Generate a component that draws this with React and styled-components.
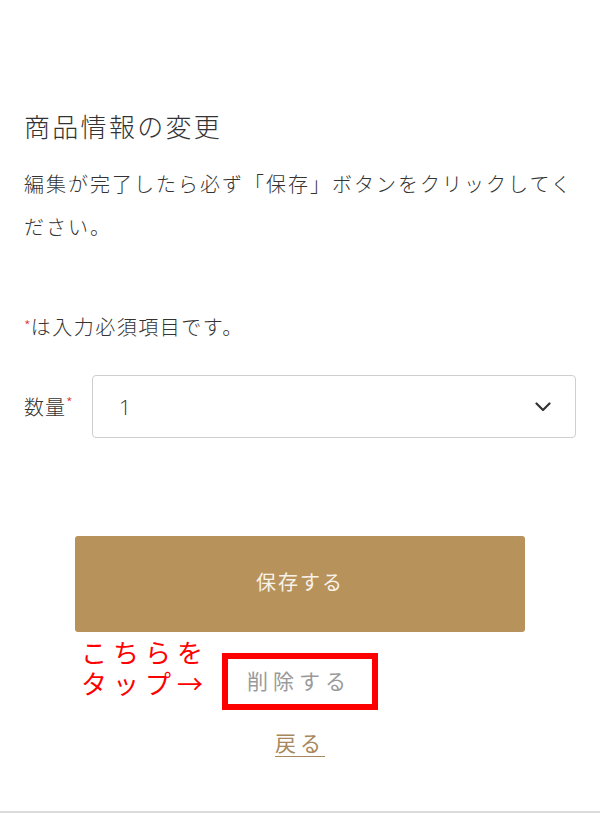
import React from "react";
import styled, { createGlobalStyle } from "styled-components";

const GlobalStyle = createGlobalStyle`
    body {
        margin: 0;
        background: #fff;
        font-family: "Noto Sans CJK JP", "Noto Sans", sans-serif;
        color: #333;
    }
`;

const Page = styled.div`
    width: 600px;
    min-height: 814px;
    background: #fff;
`;

const Content = styled.div`
    padding: 108px 24px 0;
`;

const Title = styled.h2`
    margin: 0;
    font-size: 26px;
    line-height: 36px;
    font-weight: 300;
    letter-spacing: 2.3px;
    color: #333;
`;

const Lead = styled.p`
    margin: 18px 0 0;
    font-size: 20px;
    line-height: 43px;
    font-weight: 300;
    letter-spacing: 2px;
`;

const Note = styled.p`
    margin: 63px 0 0;
    font-size: 20px;
    line-height: 30px;
    font-weight: 300;
    letter-spacing: 1.5px;
`;

const Star = styled.span`
    color: #e53935;
    font-size: 15px;
    vertical-align: ${p => (p.$raised ? "6px" : "3px")};
    letter-spacing: 0;
`;

const FieldRow = styled.div`
    display: flex;
    align-items: center;
    margin-top: 33px;
`;

const Label = styled.label`
    width: 68px;
    flex: none;
    font-size: 20px;
    font-weight: 300;
    letter-spacing: 1px;
`;

const Select = styled.div`
    flex: 1;
    height: 63px;
    box-sizing: border-box;
    border: 1px solid #cfcfcf;
    border-radius: 4px;
    display: flex;
    align-items: center;
    justify-content: space-between;
    padding: 0 24px 0 26px;
`;

const Value = styled.span`
    font-family: "Open Sans", "Noto Sans", sans-serif;
    font-weight: 300;
    font-size: 21px;
    color: #333;
`;

const Actions = styled.div`
    display: flex;
    flex-direction: column;
    align-items: center;
    margin-top: 98px;
`;

const SaveButton = styled.button`
    width: 450px;
    height: 96px;
    border: none;
    border-radius: 3px;
    background: #b8925b;
    color: #f8f2e8;
    font-family: inherit;
    font-size: 20px;
    letter-spacing: 2px;
    padding: 0 0 6px;
`;

const DeleteRow = styled.div`
    position: relative;
    margin-top: 21px;
`;

const Highlight = styled.div`
    width: 156px;
    height: 57px;
    box-sizing: border-box;
    border: 6px solid #ff0000;
    display: flex;
    align-items: center;
    justify-content: center;
`;

const DeleteButton = styled.button`
    border: none;
    background: none;
    padding: 0 2px 4px 0;
    font-family: inherit;
    font-size: 21px;
    letter-spacing: 5px;
    color: #9a9a9a;
`;

const Annotation = styled.div`
    position: absolute;
    left: -141px;
    top: -17px;
    white-space: nowrap;
    font-size: 26px;
    line-height: 31px;
    letter-spacing: 6px;
    color: #ff0000;
`;

const AnnotationLine = styled.div`
    height: 31px;
`;

const BackLink = styled.a`
    margin-top: 17px;
    font-size: 21px;
    line-height: 30px;
    letter-spacing: 4px;
    color: #a8875c;
    text-decoration: underline;
    text-underline-offset: 5px;
    text-decoration-thickness: 1px;
`;

const Divider = styled.hr`
    margin: 54px 0 0;
    border: none;
    border-top: 2px solid #dcdcdc;
`;

const Chevron = () => (
    <svg width="16" height="10" viewBox="0 0 16 10" fill="none">
        <polyline points="1.5,1.5 8,8 14.5,1.5" stroke="#333" strokeWidth="2.2" strokeLinecap="round" strokeLinejoin="round" />
    </svg>
);

const App = () => {
    return (
        <Page>
            <GlobalStyle />
            <Content>
                <Title>商品情報の変更</Title>
                <Lead>編集が完了したら必ず「保存」ボタンをクリックしてください。</Lead>
                <Note>
                    <Star>*</Star>は入力必須項目です。
                </Note>
                <FieldRow>
                    <Label>
                        数量<Star $raised>*</Star>
                    </Label>
                    <Select>
                        <Value>1</Value>
                        <Chevron />
                    </Select>
                </FieldRow>
                <Actions>
                    <SaveButton>保存する</SaveButton>
                    <DeleteRow>
                        <Annotation>
                            <AnnotationLine>こちらを</AnnotationLine>
                            <AnnotationLine>タップ→</AnnotationLine>
                        </Annotation>
                        <Highlight>
                            <DeleteButton>削除する</DeleteButton>
                        </Highlight>
                    </DeleteRow>
                    <BackLink>戻る</BackLink>
                </Actions>
            </Content>
            <Divider />
        </Page>
    );
};

export default App;
